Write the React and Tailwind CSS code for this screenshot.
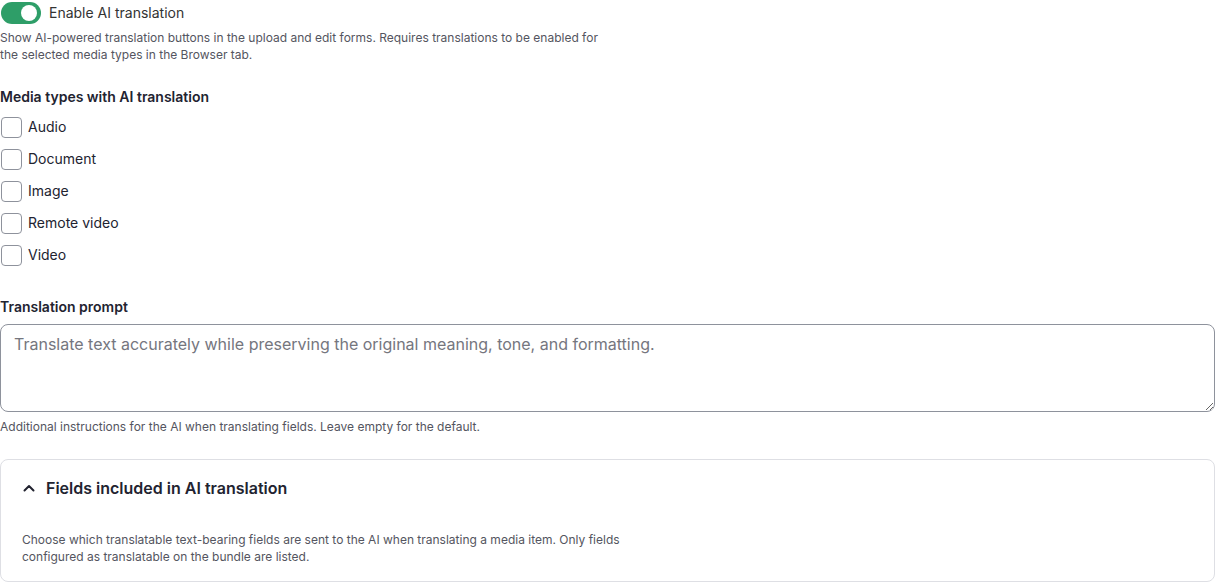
import React, { useState } from 'react'

const mediaTypes = ['Audio', 'Document', 'Image', 'Remote video', 'Video']

function App() {
  const [enabled, setEnabled] = useState(true)
  const [checked, setChecked] = useState({})
  const [open, setOpen] = useState(true)

  return (
    <div className="w-[1216px] bg-white text-[#222330] pr-px" style={{ fontFamily: 'Inter, "Noto Sans", sans-serif' }}>
      {/* toggle */}
      <div className="flex items-center gap-[8px] pt-[2px] pl-px h-[24px]">
        <button
          onClick={() => setEnabled(v => !v)}
          className={`relative w-[40px] h-[22px] rounded-full ${enabled ? 'bg-[#2e9e68]' : 'bg-[#ccc]'}`}
        >
          <span className={`absolute top-[3px] w-[16px] h-[16px] rounded-full bg-white ${enabled ? 'right-[4px]' : 'left-[4px]'}`}></span>
        </button>
        <span className="text-[14px] leading-[20px] text-[#333]">Enable AI translation</span>
      </div>
      <p className="mt-[5px] max-w-[606px] text-[12px] leading-[17px] text-[#545560]">
        Show AI-powered translation buttons in the upload and edit forms. Requires translations to be enabled for the selected media types in the Browser tab.
      </p>

      {/* media types */}
      <div className="mt-[24px] text-[14px] font-semibold leading-[20px] text-[#222330]">Media types with AI translation</div>
      <div className="mt-[4px] flex flex-col">
        {mediaTypes.map((t) => (
          <label key={t} className="flex items-center gap-[6px] h-[32px] pl-px cursor-pointer">
            <input
              type="checkbox"
              checked={!!checked[t]}
              onChange={() => setChecked(c => ({ ...c, [t]: !c[t] }))}
              className="appearance-none w-[21px] h-[21px] m-0 rounded-[4px] border border-[#8e929c] bg-white checked:bg-[#2e9e68]"
            />
            <span className="text-[14px] leading-[20px] text-[#222330]">{t}</span>
          </label>
        ))}
      </div>

      {/* prompt */}
      <div className="mt-[26px] text-[14px] font-semibold leading-[20px]">Translation prompt</div>
      <textarea
        rows={3}
        placeholder="Translate text accurately while preserving the original meaning, tone, and formatting."
        className="mt-[7px] block w-full h-[88px] rounded-[8px] border border-[#8e929c] px-[13px] py-[8px] text-[16px] leading-[22px] placeholder-[#75767e] outline-none"
      />
      <p className="mt-[6px] text-[12px] leading-[17px] text-[#545560]">
        Additional instructions for the AI when translating fields. Leave empty for the default.
      </p>

      {/* details */}
      <div className="mt-[24px] rounded-[8px] border border-[#dedfe4] h-[123px]">
        <button onClick={() => setOpen(o => !o)} className="flex items-center gap-[10px] pl-[21px] h-[56px]">
          <svg width="14" height="14" viewBox="0 0 14 14" fill="none" stroke="#222330" strokeWidth="2" strokeLinecap="round" strokeLinejoin="round">
            {open ? <path d="M2.5 9.5L7 5l4.5 4.5" /> : <path d="M2.5 5L7 9.5 11.5 5" />}
          </svg>
          <span className="text-[16px] font-semibold leading-[22px] text-[#222330]">Fields included in AI translation</span>
        </button>
        {open && (
          <p className="mt-[15px] ml-[21px] max-w-[620px] text-[12px] leading-[17px] text-[#545560]">
            Choose which translatable text-bearing fields are sent to the AI when translating a media item. Only fields configured as translatable on the bundle are listed.
          </p>
        )}
      </div>
    </div>
  )
}

export default App
